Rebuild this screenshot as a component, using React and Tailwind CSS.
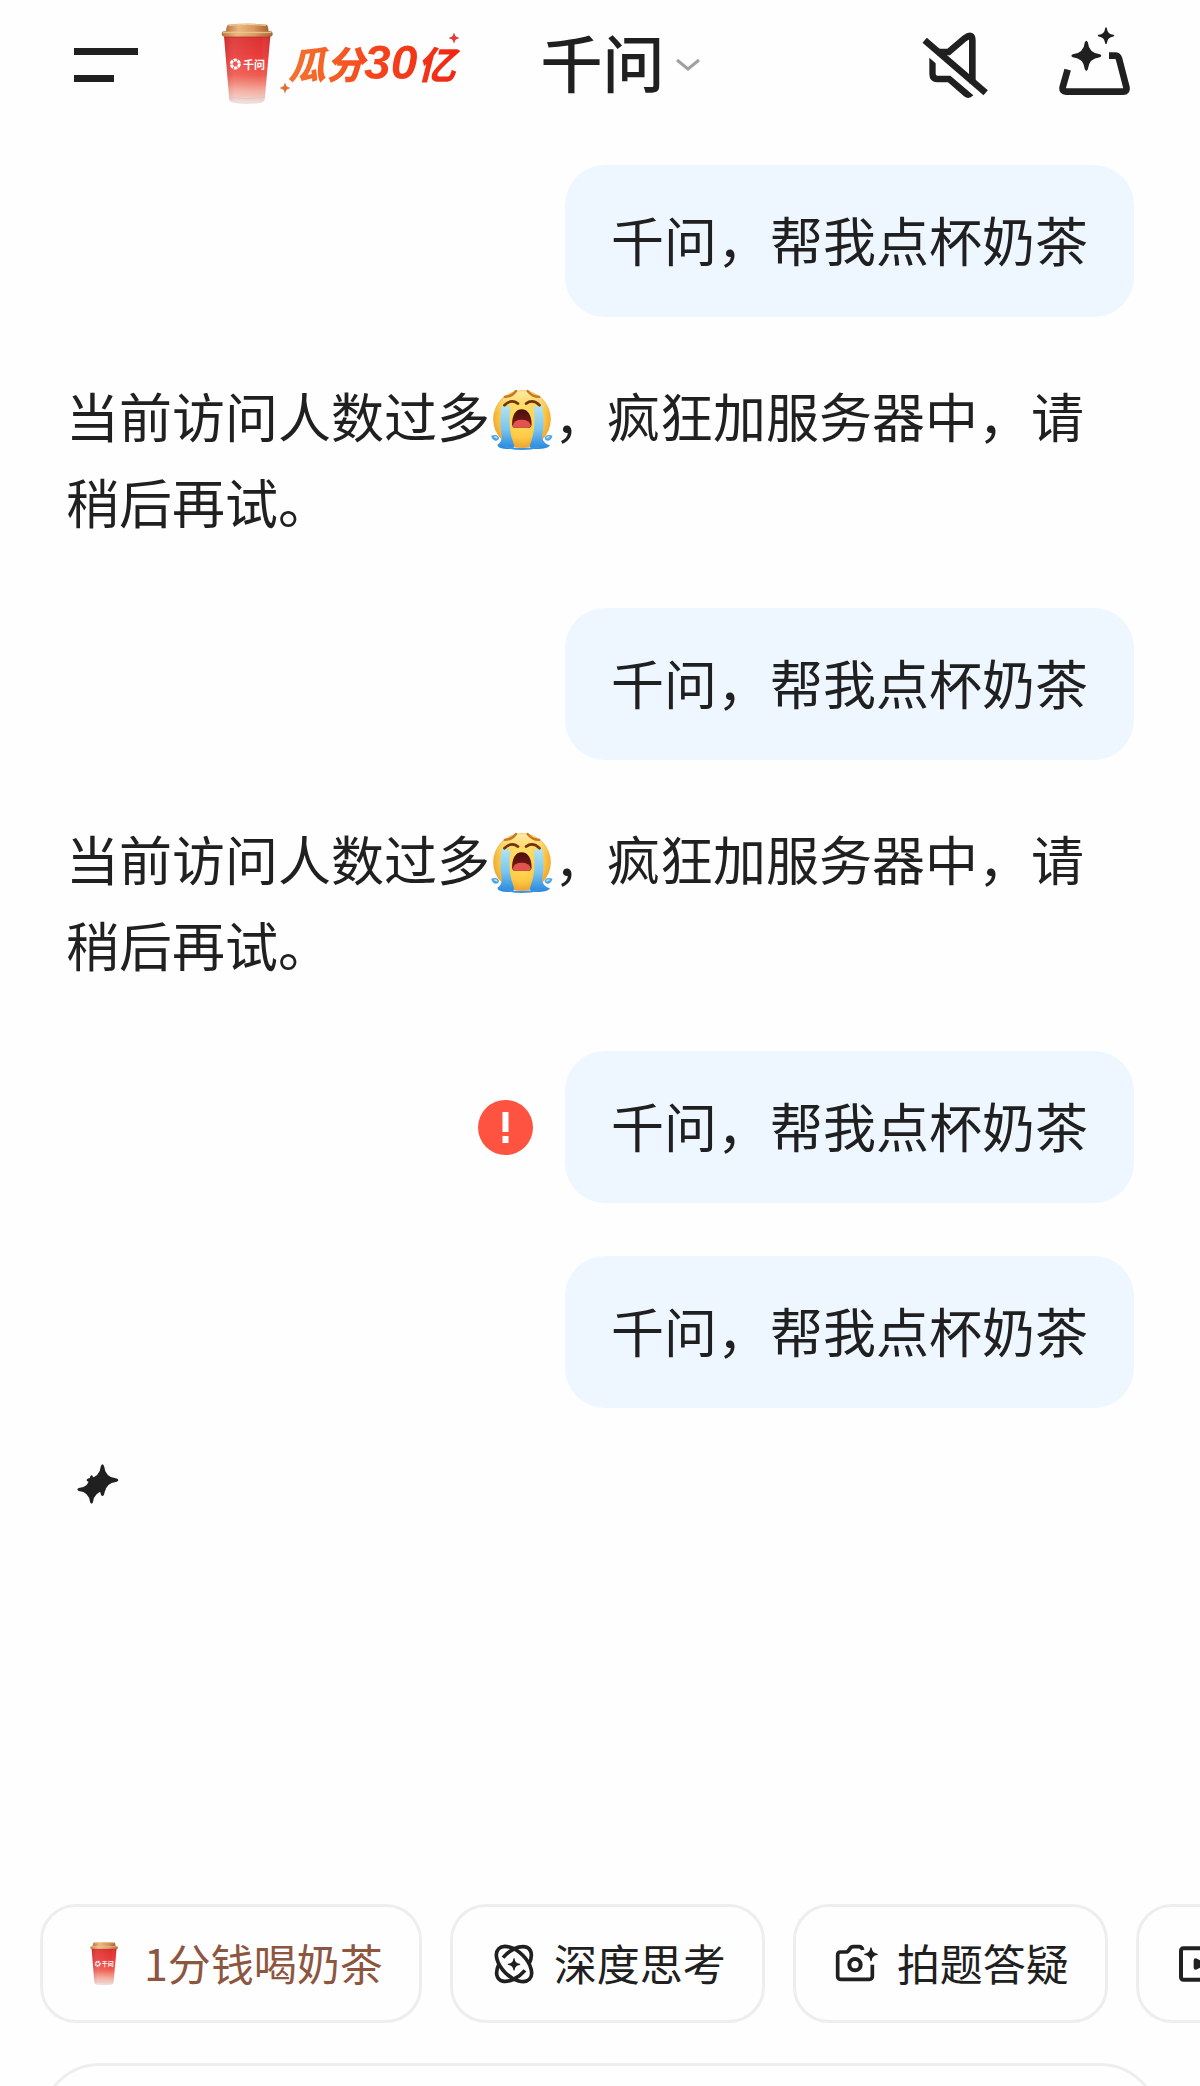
import React from "react";

const star = (x, y, r) => {
  const t = r * 0.1;
  const e = r * 0.9;
  const c = r * 0.17;
  return `M${x - t} ${y - e}Q${x} ${y - r * 1.1} ${x + t} ${y - e}Q${x + c} ${y - c} ${x + e} ${y - t}Q${x + r * 1.1} ${y} ${x + e} ${y + t}Q${x + c} ${y + c} ${x + t} ${y + e}Q${x} ${y + r * 1.1} ${x - t} ${y + e}Q${x - c} ${y + c} ${x - e} ${y + t}Q${x - r * 1.1} ${y} ${x - e} ${y - t}Q${x - c} ${y - c} ${x - t} ${y - e}Z`;
};

function Cup({ id, className }) {
  return (
    <svg viewBox="543 63 156 249" className={className} aria-hidden="true">
      <defs>
        <linearGradient id={id + "-body"} x1="0" y1="0" x2="0" y2="1">
          <stop offset="0" stopColor="#d92f30" />
          <stop offset="0.3" stopColor="#ea3b3a" />
          <stop offset="0.58" stopColor="#ee5a50" />
          <stop offset="0.8" stopColor="#f3aa9b" />
          <stop offset="1" stopColor="#efe3e0" />
        </linearGradient>
        <linearGradient id={id + "-lid"} x1="0" y1="0" x2="1" y2="0">
          <stop offset="0" stopColor="#b9743d" />
          <stop offset="0.3" stopColor="#eab880" />
          <stop offset="0.65" stopColor="#d79a5f" />
          <stop offset="1" stopColor="#a9622f" />
        </linearGradient>
        <linearGradient id={id + "-shade"} x1="0" y1="0" x2="1" y2="0">
          <stop offset="0" stopColor="#8a0f10" stopOpacity="0.2" />
          <stop offset="0.25" stopColor="#fff" stopOpacity="0.08" />
          <stop offset="0.8" stopColor="#fff" stopOpacity="0" />
          <stop offset="1" stopColor="#8a0f10" stopOpacity="0.15" />
        </linearGradient>
      </defs>
      <path d="M552 104H691L674 296Q672 308 622 309Q571 308 568 296Z" fill={`url(#${id}-body)`} />
      <path d="M552 104H691L674 296Q672 308 622 309Q571 308 568 296Z" fill={`url(#${id}-shade)`} />
      <path d="M567 289Q620 297 675 289" fill="none" stroke="#d9c3bf" strokeWidth="2" />
      <path d="M564 71Q622 64 680 71Q684 72 686 92H557Q560 73 564 71Z" fill={`url(#${id}-lid)`} />
      <path d="M566 73Q622 67 678 73" fill="none" stroke="#f3cf9f" strokeWidth="3" />
      <rect x="545" y="91" width="153" height="16" rx="7" fill={`url(#${id}-lid)`} />
      <path d="M549 95H694" stroke="#f0c592" strokeWidth="3" />
      <path d="M552 108H691" stroke="#9f2320" strokeWidth="2" opacity="0.6" />
      <circle cx="586" cy="189" r="12" fill="none" stroke="#fff" strokeWidth="9" strokeDasharray="10 2.5" />
      <text x="609" y="203" fill="#fff" fontSize="33" fontWeight="700" fontFamily="Noto Sans CJK SC, sans-serif">千问</text>
    </svg>
  );
}

function CryingFace() {
  return (
    <svg viewBox="36 88 190 184" role="img" aria-label="大哭" className="mb-2 inline-block h-[61px] w-16 align-middle">
      <defs>
        <radialGradient id="face" cx="0.5" cy="0.45" r="0.58">
          <stop offset="0" stopColor="#ffe36a" />
          <stop offset="0.65" stopColor="#fdc944" />
          <stop offset="1" stopColor="#ea9a2c" />
        </radialGradient>
        <linearGradient id="brow" x1="0" y1="0" x2="0" y2="1">
          <stop offset="0" stopColor="#fff1b8" stopOpacity="0.9" />
          <stop offset="0.4" stopColor="#ffe680" stopOpacity="0" />
        </linearGradient>
        <linearGradient id="tear" x1="0" y1="0" x2="0" y2="1">
          <stop offset="0" stopColor="#b5e4f2" />
          <stop offset="0.55" stopColor="#78c4ee" />
          <stop offset="1" stopColor="#2687dc" />
        </linearGradient>
        <linearGradient id="mouth" x1="0" y1="0" x2="0" y2="1">
          <stop offset="0" stopColor="#4a0f0c" />
          <stop offset="1" stopColor="#7c1d18" />
        </linearGradient>
      </defs>
      <circle cx="131" cy="179" r="87" fill="url(#face)" />
      <circle cx="131" cy="179" r="85" fill="url(#brow)" />
      <path d="M70 138C65 165 64 200 70 228C71 241 66 250 57 256C57 266 76 270 96 269C106 268 110 262 104 248C92 215 91 180 96 142Z" fill="url(#tear)" />
      <path d="M192 138C197 165 198 200 192 228C191 241 196 250 215 258C214 266 192 270 166 269C156 268 152 262 158 248C170 215 171 180 166 142Z" fill="url(#tear)" />
      <path d="M80 262Q131 276 184 262" fill="none" stroke="#3b95e2" strokeWidth="6" />
      <path d="M79 112Q101 111 113 94" fill="none" stroke="#c9781f" strokeWidth="7" strokeLinecap="round" />
      <path d="M183 112Q161 111 148 94" fill="none" stroke="#c9781f" strokeWidth="7" strokeLinecap="round" />
      <path d="M78 137Q98 117 119 132" fill="none" stroke="#70350f" strokeWidth="8" strokeLinecap="round" />
      <path d="M143 132Q164 117 184 137" fill="none" stroke="#70350f" strokeWidth="8" strokeLinecap="round" />
      <path d="M130 149C149 149 160 168 160 194Q160 205 149 205H112Q101 205 101 194C101 168 111 149 130 149Z" fill="url(#mouth)" />
      <path d="M103 199Q107 181 130 181T158 199Q156 205 149 205H112Q105 205 103 199Z" fill="#e2524e" />
      <path d="M38 229Q58 222 62 236Q60 246 50 244Q41 241 38 229Z" fill="#4ba5e4" />
      <path d="M223 229Q203 222 199 236Q201 246 211 244Q220 241 223 229Z" fill="#4ba5e4" />
      <path d="M47 233Q55 232 56 237" fill="none" stroke="#c4e8fa" strokeWidth="4" />
      <path d="M214 233Q206 232 205 237" fill="none" stroke="#c4e8fa" strokeWidth="4" />
    </svg>
  );
}

function MuteIcon() {
  return (
    <svg viewBox="36 36 198 198" className="size-[66px]" fill="none" stroke="#202020" strokeWidth="20" aria-hidden="true">
      <path d="M44 61L227 218" />
      <path d="M82 96H116L164 55Q187 38 187 60V190" />
      <path d="M58 113L77 130V162Q77 167 83 167H121L190 226Q176 240 162 229L114 187H82Q58 186 58 162Z" fill="#202020" stroke="none" />
    </svg>
  );
}

function BagIcon() {
  return (
    <svg viewBox="444 18 216 210" className="h-[70px] w-[72px]" fill="none" stroke="#202020" strokeWidth="20" aria-hidden="true">
      <path d="M473 149L458 202Q456 215 468 215H639Q652 215 649 201L627 116Q624 107 615 107H597" />
      <path d={star(529, 107, 45)} fill="#202020" stroke="none" />
      <path d={star(588, 47, 25)} fill="#202020" stroke="none" />
    </svg>
  );
}

function AtomIcon() {
  return (
    <svg viewBox="33 31 132 132" className="size-11" fill="none" stroke="#202020" strokeWidth="11" aria-hidden="true">
      <ellipse cx="99" cy="97" rx="65" ry="37" transform="rotate(45 99 97)" />
      <path d="M66 78A65 37 -45 0 1 144 97" />
      <path d="M132 116A65 37 -45 0 1 54 97" />
      <path d={star(99, 98, 19)} fill="#202020" stroke="none" />
    </svg>
  );
}

function CameraIcon() {
  return (
    <svg viewBox="30 36 132 132" className="size-11" fill="none" stroke="#202020" strokeWidth="11" aria-hidden="true">
      <path d="M113 60Q111 50 102 50H85Q78 50 74 57Q69 66 63 66H47Q38 66 38 75V139Q38 148 47 148H133Q142 148 142 139V104" />
      <circle cx="90" cy="104" r="17" strokeWidth="12" />
      <path d={star(138, 73, 21)} fill="#202020" stroke="none" />
    </svg>
  );
}

function VideoIcon() {
  return (
    <svg viewBox="171 153 132 132" className="size-11" fill="none" stroke="#202020" strokeWidth="12" aria-hidden="true">
      <rect x="180" y="172" width="114" height="94" rx="7" />
      <path d="M224 208L246 219L224 230Z" fill="#202020" strokeLinejoin="round" />
    </svg>
  );
}

function UserMessage({ failed }) {
  return (
    <div className="flex items-center justify-end gap-8">
      {failed && (
        <button type="button" aria-label="重新发送" className="size-[55px]">
          <svg viewBox="0 0 55 55" aria-hidden="true">
            <circle cx="27.5" cy="27.5" r="27.5" fill="#ff5341" />
            <path d="M27.5 12V32M27.5 36V43" stroke="#fff" strokeWidth="6" />
          </svg>
        </button>
      )}
      <p className="rounded-[40px] bg-[#eef7ff] px-[46px] pt-[31px] pb-[35px] text-[53px] leading-[86px]">千问，帮我点杯奶茶</p>
    </div>
  );
}

function Reply() {
  return (
    <p className="pt-[55px] pb-16 text-[53px] leading-[86px]">
      <span>当前访问人数过多</span>
      <CryingFace />
      <span>，疯狂加服务器中，请</span>
      <span>稍后再试。</span>
    </p>
  );
}

function Chip({ icon, children, className = "", ...rest }) {
  return (
    <button
      type="button"
      className={"flex h-[119px] shrink-0 items-center gap-[18px] rounded-[36px] border-[3px] border-[#eeeeee] pr-9 pl-[39px] text-[43px] leading-[60px] whitespace-nowrap " + className}
      {...rest}
    >
      {icon}
      {children && <span className="pb-1">{children}</span>}
    </button>
  );
}

export default function App() {
  return (
    <div lang="zh-CN" className="flex h-screen flex-col overflow-hidden bg-[#fefefe] font-['Noto_Sans_CJK_SC',sans-serif] text-[#202020]">
      <header className="flex h-[130px] shrink-0 items-center pr-[70px] pl-[74px]">
        <button type="button" aria-label="菜单" className="flex w-16 flex-col gap-5">
          <span className="h-[7px] w-full bg-[#202020]" />
          <span className="h-[7px] w-10 bg-[#202020]" />
        </button>
        <a href="#promo" className="ml-[83px] flex items-center gap-[15px] pb-1">
          <Cup id="cup-large" className="h-[83px] w-[52px]" />
          <span className="relative whitespace-nowrap">
            <span className="block bg-linear-to-r from-[#f4742f] via-[#f5431c] to-[#ee2414] bg-clip-text pr-2 text-[38px] leading-[60px] font-black text-transparent italic">
              瓜分<span className="font-['Liberation_Sans',sans-serif] text-[48px] font-bold">30</span>亿
            </span>
            <svg viewBox="0 0 8 8" className="absolute top-0 right-1 size-[10px]" aria-hidden="true">
              <path d={star(4, 4, 4)} fill="#e03a3a" />
            </svg>
            <svg viewBox="0 0 8 8" className="absolute bottom-0 -left-2 size-[10px]" aria-hidden="true">
              <path d={star(4, 4, 4)} fill="#e2702f" />
            </svg>
          </span>
        </a>
        <button type="button" className="ml-[77px] flex items-center gap-3">
          <h1 className="pb-2 text-[62px] leading-[80px] font-medium whitespace-nowrap">千问</h1>
          <svg viewBox="0 0 24 14" className="h-[14px] w-6" fill="none" stroke="#a0a0a0" strokeWidth="3" aria-hidden="true">
            <path d="M1 2L12 11L23 2" />
          </svg>
        </button>
        <div className="ml-auto flex items-center gap-[70px]">
          <button type="button" aria-label="静音"><MuteIcon /></button>
          <button type="button" aria-label="新对话" className="mb-2"><BagIcon /></button>
        </div>
      </header>

      <main className="min-h-0 flex-1 overflow-hidden pt-[35px] pr-[66px] pl-[66px]">
        <UserMessage />
        <Reply />
        <UserMessage />
        <Reply />
        <div className="flex flex-col gap-[53px]">
          <UserMessage failed />
          <UserMessage />
        </div>
        <svg viewBox="111 102 127 121" className="mt-14 ml-[11px] h-10 w-[42px]" fill="#202020" role="img" aria-label="正在思考">
          <path d={star(188, 151, 48)} />
          <path d={star(155, 179, 43)} />
          <circle cx="171" cy="165" r="20" />
        </svg>
      </main>

      <footer className="shrink-0">
        <div className="flex gap-7 overflow-hidden pl-10">
          <Chip className="text-[#8d5640]" icon={<span className="flex w-11 justify-center"><Cup id="cup-small" className="h-[45px] w-[28px]" /></span>}>1分钱喝奶茶</Chip>
          <Chip icon={<AtomIcon />}>深度思考</Chip>
          <Chip icon={<CameraIcon />}>拍题答疑</Chip>
          <Chip className="w-[315px]" aria-label="视频" icon={<VideoIcon />} />
        </div>
        <div className="mt-10 h-[23px] overflow-hidden px-10">
          <input type="text" aria-label="输入消息" className="block h-[140px] w-full rounded-[60px] border-[3px] border-[#eeeeee] bg-transparent px-10 text-[43px]" />
        </div>
      </footer>
    </div>
  );
}
